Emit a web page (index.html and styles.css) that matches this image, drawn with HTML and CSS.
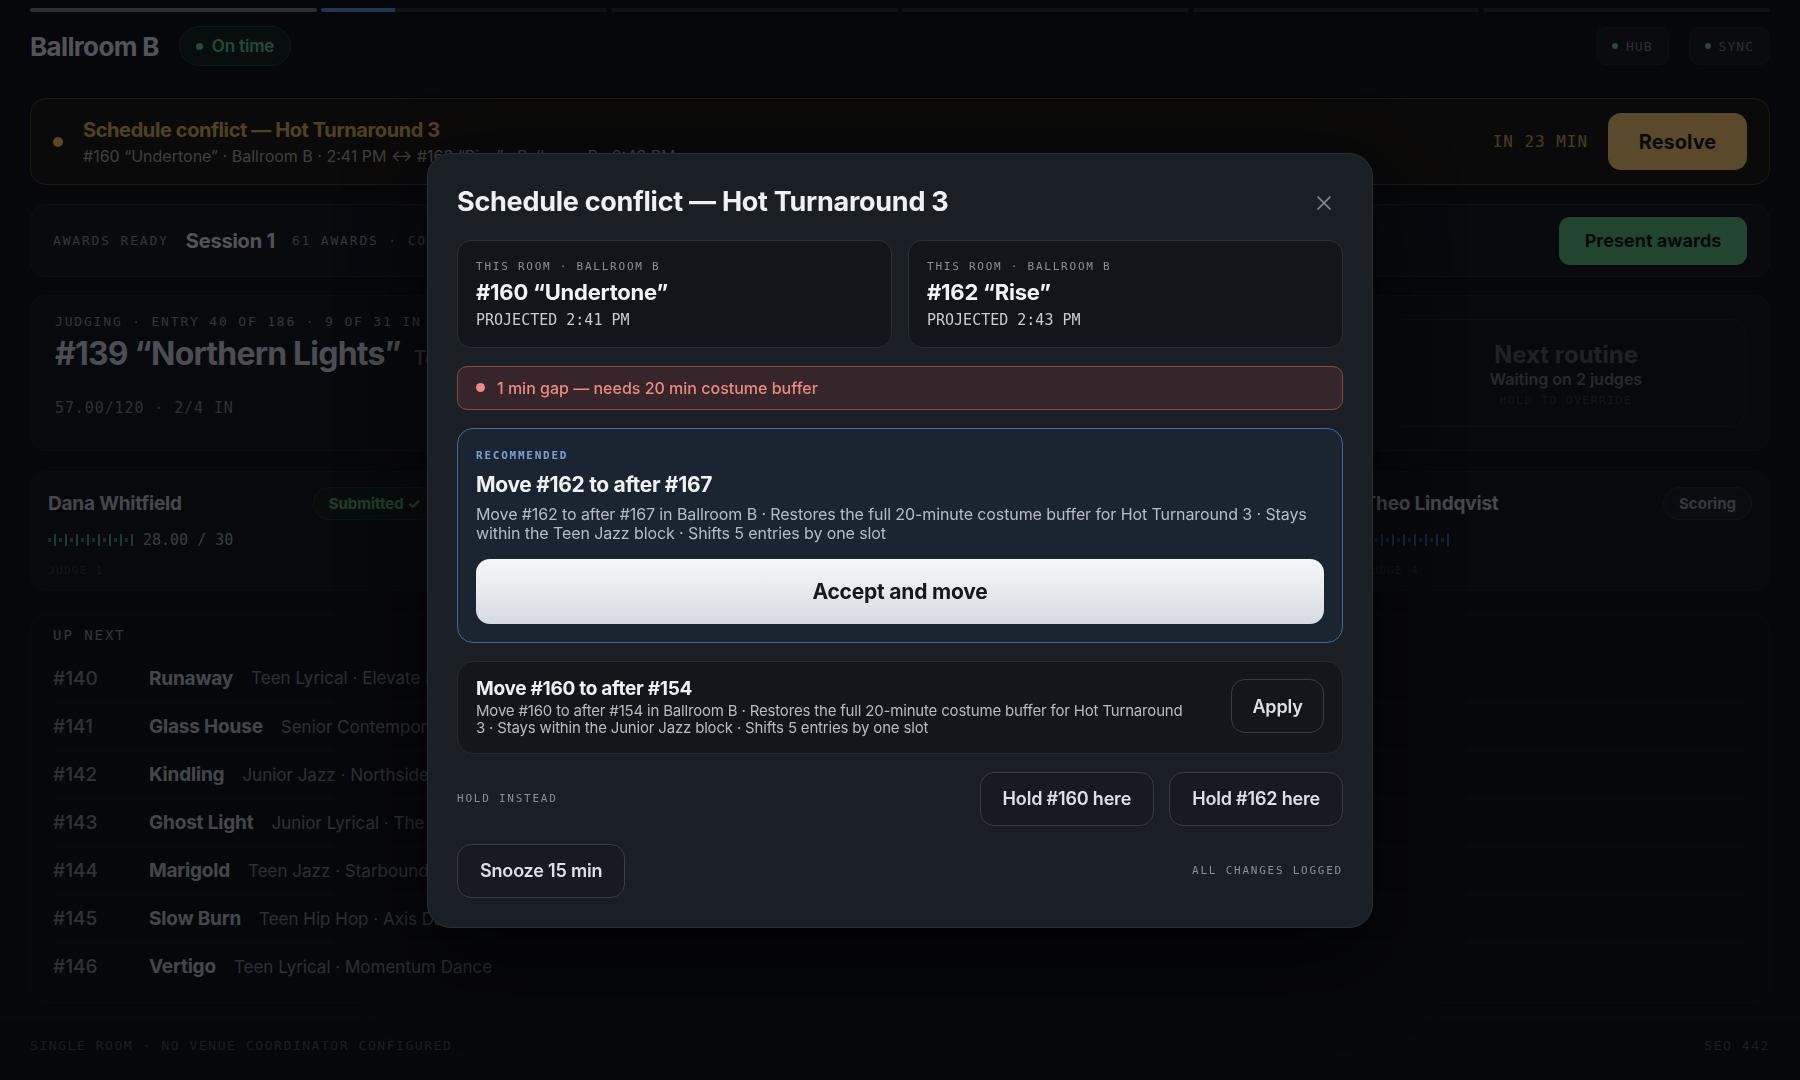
FILE: index.html
```html
<!DOCTYPE html>
<html lang="en">
<head>
    <meta charset="UTF-8">
    <meta name="viewport" content="width=device-width, initial-scale=1.0">
    <title>Ballroom B — Stage Manager</title>
    <link rel="stylesheet" href="styles.css">
</head>
<body>
    <div class="page">
        <div class="progress">
            <div class="seg done"></div>
            <div class="seg"><div class="fill"></div></div>
            <div class="seg"></div>
            <div class="seg"></div>
            <div class="seg"></div>
            <div class="seg"></div>
        </div>

        <header class="topbar">
            <div class="room">
                <h1>Ballroom B</h1>
                <span class="pill ok"><span class="dot"></span>On time</span>
            </div>
            <div class="links">
                <span class="chip"><span class="dot"></span>HUB</span>
                <span class="chip"><span class="dot"></span>SYNC</span>
            </div>
        </header>

        <section class="banner">
            <span class="banner-dot"></span>
            <div class="banner-text">
                <div class="banner-title">Schedule conflict — Hot Turnaround 3</div>
                <div class="banner-sub">#160 “Undertone” · Ballroom B · 2:41 PM ↔ #162 “Rise” · Ballroom B · 2:43 PM</div>
            </div>
            <span class="countdown">IN 23 MIN</span>
            <button class="btn-resolve">Resolve</button>
        </section>

        <section class="awards">
            <span class="mono-label">AWARDS READY</span>
            <span class="session">Session 1</span>
            <span class="mono-label">61 AWARDS · COUNTS VERIFIED</span>
            <button class="btn-awards">Present awards</button>
        </section>

        <section class="judging">
            <div class="judging-main">
                <div class="mono-label">JUDGING · ENTRY 40 OF 186 · 9 OF 31 IN TEEN CONTEMPORARY</div>
                <div class="now">#139 “Northern Lights” <span class="now-meta">Teen Contemporary · Elevate Dance</span></div>
                <div class="mono-stat">57.00/120 · 2/4 IN</div>
            </div>
            <div class="next-box">
                <div class="next-title">Next routine</div>
                <div class="next-sub">Waiting on 2 judges</div>
                <div class="next-hint">HOLD TO OVERRIDE</div>
            </div>
        </section>

        <section class="judges">
            <div class="judge">
                <div class="judge-head">
                    <span class="judge-name">Dana Whitfield</span>
                    <span class="status done">Submitted ✓</span>
                </div>
                <div class="judge-score">
                    <span class="ticks green"><span class="lo"></span><span class="hi"></span><span class="lo"></span><span class="hi"></span><span class="lo"></span><span class="hi"></span><span class="lo"></span><span class="hi"></span><span class="lo"></span><span class="hi"></span><span class="lo"></span><span class="hi"></span><span class="lo"></span><span class="hi"></span><span class="lo"></span><span class="hi"></span></span>
                    <span class="score-num">28.00 / 30</span>
                </div>
                <div class="judge-id">JUDGE 1</div>
            </div>
            <div class="judge">
                <div class="judge-head">
                    <span class="judge-name">Marcus Bell</span>
                    <span class="status done">Submitted ✓</span>
                </div>
                <div class="judge-score">
                    <span class="ticks green"><span class="lo"></span><span class="hi"></span><span class="lo"></span><span class="hi"></span><span class="lo"></span><span class="hi"></span><span class="lo"></span><span class="hi"></span><span class="lo"></span><span class="hi"></span><span class="lo"></span><span class="hi"></span><span class="lo"></span><span class="hi"></span><span class="lo"></span><span class="hi"></span></span>
                    <span class="score-num">29.00 / 30</span>
                </div>
                <div class="judge-id">JUDGE 2</div>
            </div>
            <div class="judge">
                <div class="judge-head">
                    <span class="judge-name">Priya Raman</span>
                    <span class="status">Scoring</span>
                </div>
                <div class="judge-score">
                    <span class="ticks blue"><span class="lo"></span><span class="hi"></span><span class="lo"></span><span class="hi"></span><span class="lo"></span><span class="hi"></span><span class="lo"></span><span class="hi"></span><span class="lo"></span><span class="hi"></span><span class="lo"></span><span class="hi"></span><span class="lo"></span><span class="hi"></span><span class="lo"></span><span class="hi"></span></span>
                </div>
                <div class="judge-id">JUDGE 3</div>
            </div>
            <div class="judge">
                <div class="judge-head">
                    <span class="judge-name">Theo Lindqvist</span>
                    <span class="status">Scoring</span>
                </div>
                <div class="judge-score">
                    <span class="ticks blue"><span class="lo"></span><span class="hi"></span><span class="lo"></span><span class="hi"></span><span class="lo"></span><span class="hi"></span><span class="lo"></span><span class="hi"></span><span class="lo"></span><span class="hi"></span><span class="lo"></span><span class="hi"></span><span class="lo"></span><span class="hi"></span><span class="lo"></span><span class="hi"></span></span>
                </div>
                <div class="judge-id">JUDGE 4</div>
            </div>
        </section>

        <section class="upnext">
            <div class="mono-label big">UP NEXT</div>
            <div class="entry"><span class="num">#140</span><span class="title">Runaway</span><span class="meta">Teen Lyrical · Elevate Dance</span></div>
            <div class="entry"><span class="num">#141</span><span class="title">Glass House</span><span class="meta">Senior Contemporary · Pulse Studio</span></div>
            <div class="entry"><span class="num">#142</span><span class="title">Kindling</span><span class="meta">Junior Jazz · Northside Ballet</span></div>
            <div class="entry"><span class="num">#143</span><span class="title">Ghost Light</span><span class="meta">Junior Lyrical · The Movement Lab</span></div>
            <div class="entry"><span class="num">#144</span><span class="title">Marigold</span><span class="meta">Teen Jazz · Starbound Studio</span></div>
            <div class="entry"><span class="num">#145</span><span class="title">Slow Burn</span><span class="meta">Teen Hip Hop · Axis Dance Co.</span></div>
            <div class="entry"><span class="num">#146</span><span class="title">Vertigo</span><span class="meta">Teen Lyrical · Momentum Dance</span></div>
        </section>

        <footer class="footer">
            <span>SINGLE ROOM · NO VENUE COORDINATOR CONFIGURED</span>
            <span>SEQ 442</span>
        </footer>
    </div>

    <div class="scrim">
        <div class="modal">
            <div class="modal-head">
                <h2>Schedule conflict — Hot Turnaround 3</h2>
                <button class="close" aria-label="Close">
                    <svg width="16" height="16" viewBox="0 0 16 16"><path d="M2 2 L14 14 M14 2 L2 14" stroke="currentColor" stroke-width="1.6" stroke-linecap="round"/></svg>
                </button>
            </div>

            <div class="rooms">
                <div class="room-card">
                    <div class="tiny">THIS ROOM · BALLROOM B</div>
                    <div class="room-entry">#160 “Undertone”</div>
                    <div class="projected">PROJECTED 2:41 PM</div>
                </div>
                <div class="room-card">
                    <div class="tiny">THIS ROOM · BALLROOM B</div>
                    <div class="room-entry">#162 “Rise”</div>
                    <div class="projected">PROJECTED 2:43 PM</div>
                </div>
            </div>

            <div class="alert"><span class="alert-dot"></span>1 min gap — needs 20 min costume buffer</div>

            <div class="option recommended">
                <div class="tiny blue">RECOMMENDED</div>
                <div class="option-title">Move #162 to after #167</div>
                <p class="option-desc">Move #162 to after #167 in Ballroom B · Restores the full 20-minute costume buffer for Hot Turnaround 3 · Stays within the Teen Jazz block · Shifts 5 entries by one slot</p>
                <button class="btn-accept">Accept and move</button>
            </div>

            <div class="option alt">
                <div class="alt-text">
                    <div class="option-title small">Move #160 to after #154</div>
                    <p class="option-desc small">Move #160 to after #154 in Ballroom B · Restores the full 20-minute costume buffer for Hot Turnaround 3 · Stays within the Junior Jazz block · Shifts 5 entries by one slot</p>
                </div>
                <button class="btn-ghost">Apply</button>
            </div>

            <div class="modal-row">
                <span class="tiny">HOLD INSTEAD</span>
                <div class="row-btns">
                    <button class="btn-ghost wide">Hold #160 here</button>
                    <button class="btn-ghost wide">Hold #162 here</button>
                </div>
            </div>

            <div class="modal-row">
                <button class="btn-ghost wide">Snooze 15 min</button>
                <span class="tiny">ALL CHANGES LOGGED</span>
            </div>
        </div>
    </div>
</body>
</html>
```

FILE: styles.css
```css
body {
    margin: 0;
    background: #0c0e13;
    color: #e4e7ed;
    font-family: Inter, "Noto Sans", sans-serif;
    height: 1080px;
    overflow: hidden;
}

button {
    font-family: inherit;
    cursor: pointer;
}

.page {
    padding: 8px 30px 0;
}

.mono-label {
    font-family: "DejaVu Sans Mono", monospace;
    font-size: 13px;
    letter-spacing: 0.14em;
    color: #7d828b;
}

/* progress segments */
.progress {
    display: flex;
    gap: 4px;
}

.progress .seg {
    flex: 1;
    height: 4px;
    border-radius: 2px;
    background: #262a31;
    overflow: hidden;
}

.progress .seg.done {
    background: #6d727b;
}

.progress .fill {
    width: 26%;
    height: 100%;
    background: #4f82c4;
}

/* top bar */
.topbar {
    display: flex;
    justify-content: space-between;
    align-items: center;
    height: 40px;
    margin-top: 14px;
}

.room {
    display: flex;
    align-items: center;
    gap: 20px;
}

.room h1 {
    margin: 0;
    font-size: 26px;
    letter-spacing: -0.025em;
    color: #c7cad1;
}

.pill {
    display: flex;
    align-items: center;
    gap: 9px;
    height: 38px;
    padding: 0 16px;
    border-radius: 20px;
    font-size: 17px;
    font-weight: 600;
    letter-spacing: -0.01em;
}

.pill.ok {
    color: #57b57c;
    background: #10201a;
    border: 1px solid #1d3a2a;
}

.dot {
    width: 7px;
    height: 7px;
    border-radius: 50%;
    background: #57b57c;
}

.links {
    display: flex;
    gap: 20px;
}

.chip {
    display: flex;
    align-items: center;
    gap: 8px;
    height: 36px;
    padding: 0 15px;
    border-radius: 10px;
    background: #14171c;
    border: 1px solid #1c2027;
    font-family: "DejaVu Sans Mono", monospace;
    font-size: 13px;
    letter-spacing: 0.08em;
    color: #6c727b;
}

.chip .dot {
    width: 6px;
    height: 6px;
}

/* conflict banner */
.banner {
    display: flex;
    align-items: center;
    height: 87px;
    margin-top: 32px;
    padding: 0 22px;
    box-sizing: border-box;
    border: 1px solid #4a3d1f;
    border-radius: 16px;
    background: #17150f;
}

.banner-dot {
    width: 10px;
    height: 10px;
    border-radius: 50%;
    background: #d9b04f;
    margin-right: 20px;
}

.banner-text {
    flex: 1;
}

.banner-title {
    font-size: 20px;
    font-weight: 700;
    letter-spacing: -0.02em;
    color: #c4a04a;
}

.banner-sub {
    margin-top: 4px;
    font-size: 16px;
    color: #9c9a93;
}

.countdown {
    font-family: "DejaVu Sans Mono", monospace;
    font-size: 16px;
    letter-spacing: 0.06em;
    color: #b09350;
    margin-right: 20px;
}

.btn-resolve {
    width: 139px;
    height: 57px;
    border: none;
    border-radius: 13px;
    background: #dcb461;
    color: #17130a;
    font-size: 20px;
    font-weight: 700;
}

/* awards */
.awards {
    display: flex;
    align-items: center;
    gap: 17px;
    height: 73px;
    margin-top: 19px;
    padding: 0 22px;
    box-sizing: border-box;
    border: 1px solid #1d2128;
    border-radius: 16px;
    background: #10141a;
}

.session {
    font-size: 20px;
    font-weight: 700;
    letter-spacing: -0.01em;
    color: #c7cad1;
}

.btn-awards {
    margin-left: auto;
    width: 188px;
    height: 48px;
    border: none;
    border-radius: 11px;
    background: #4fa96d;
    color: #0b150e;
    font-size: 18px;
    font-weight: 700;
}

/* judging */
.judging {
    display: flex;
    justify-content: space-between;
    height: 156px;
    margin-top: 18px;
    padding: 18px 24px 0;
    box-sizing: border-box;
    border: 1px solid #191c22;
    border-radius: 16px;
    background: #0f1217;
}

.now {
    margin-top: 5px;
    font-size: 32px;
    line-height: 40px;
    font-weight: 700;
    letter-spacing: -0.025em;
    color: #b9bcc3;
}

.now-meta {
    margin-left: 6px;
    font-size: 20px;
    font-weight: 500;
    letter-spacing: 0;
    color: #6b7078;
}

.mono-stat {
    margin-top: 21px;
    font-family: "DejaVu Sans Mono", monospace;
    font-size: 15px;
    letter-spacing: 0.06em;
    color: #6f747c;
}

.next-box {
    width: 358px;
    height: 108px;
    margin-top: 5px;
    box-sizing: border-box;
    border: 1px solid #1b1f26;
    border-radius: 14px;
    display: flex;
    flex-direction: column;
    align-items: center;
    justify-content: center;
}

.next-title {
    font-size: 24px;
    font-weight: 700;
    color: #4a4e56;
}

.next-sub {
    font-size: 16px;
    font-weight: 600;
    color: #5d626a;
}

.next-hint {
    margin-top: 5px;
    font-family: "DejaVu Sans Mono", monospace;
    font-size: 11px;
    letter-spacing: 0.15em;
    color: #2f333a;
}

/* judges */
.judges {
    display: grid;
    grid-template-columns: repeat(4, 1fr);
    gap: 14px;
    margin-top: 20px;
}

.judge {
    height: 120px;
    padding: 17px 17px 0;
    box-sizing: border-box;
    border: 1px solid #171a20;
    border-radius: 16px;
    background: #0f1217;
}

.judge-head {
    display: flex;
    justify-content: space-between;
    align-items: center;
    height: 28px;
}

.judge-name {
    font-size: 19px;
    font-weight: 700;
    letter-spacing: -0.01em;
    color: #a9adb4;
}

.status {
    padding: 6px 15px;
    border-radius: 16px;
    font-size: 15px;
    font-weight: 700;
    color: #7f8893;
    background: #151b22;
    border: 1px solid #232a33;
}

.status.done {
    color: #4f9a6a;
    background: #0f1d15;
    border-color: #1a3325;
}

.judge-score {
    display: flex;
    align-items: center;
    gap: 10px;
    height: 20px;
    margin-top: 13px;
}

.ticks {
    display: flex;
    align-items: center;
    gap: 3px;
}

.ticks .lo {
    width: 3px;
    height: 4px;
    background: currentColor;
    opacity: 0.7;
}

.ticks .hi {
    width: 2px;
    height: 12px;
    background: currentColor;
}

.ticks.green {
    color: #3f9a5f;
}

.ticks.blue {
    color: #355a8d;
}

.score-num {
    font-family: "DejaVu Sans Mono", monospace;
    font-size: 15px;
    color: #8a9a8f;
}

.judge-id {
    margin-top: 14px;
    font-family: "DejaVu Sans Mono", monospace;
    font-size: 11px;
    letter-spacing: 0.12em;
    color: #2e3238;
}

/* up next */
.upnext {
    margin-top: 23px;
    padding: 12px 22px 12px;
    border: 1px solid #13161b;
    border-radius: 16px;
}

.mono-label.big {
    font-size: 14px;
    margin-bottom: 11px;
}

.entry {
    display: flex;
    align-items: center;
    height: 48px;
    box-sizing: border-box;
    border-top: 1px solid #15181d;
}

.mono-label.big + .entry {
    border-top: none;
}

.entry .num {
    width: 96px;
    font-size: 19px;
    font-weight: 500;
    color: #767b83;
}

.entry .title {
    font-size: 19px;
    font-weight: 700;
    letter-spacing: -0.01em;
    color: #a7abb2;
    margin-right: 18px;
}

.entry .meta {
    font-size: 17px;
    color: #6d727a;
}

.footer {
    display: flex;
    justify-content: space-between;
    margin: 14px -30px 0;
    padding: 20px 30px 0;
    border-top: 1px solid #15181d;
    font-family: "DejaVu Sans Mono", monospace;
    font-size: 13px;
    letter-spacing: 0.12em;
    color: #42464d;
}

/* modal */
.scrim {
    position: fixed;
    inset: 0;
    background: rgba(3, 4, 6, 0.6);
    display: flex;
    justify-content: center;
    align-items: center;
}

.modal {
    width: 946px;
    box-sizing: border-box;
    padding: 28px 29px 29px;
    display: flex;
    flex-direction: column;
    gap: 18px;
    background: #1a1e25;
    border: 1px solid #2a2f38;
    border-radius: 24px;
    box-shadow: 0 30px 80px rgba(0, 0, 0, 0.7);
}

.modal-head {
    display: flex;
    justify-content: space-between;
    align-items: center;
    height: 40px;
}

.modal-head h2 {
    margin: 0;
    font-size: 27px;
    font-weight: 700;
    letter-spacing: -0.01em;
    color: #eef0f4;
}

.close {
    background: none;
    border: none;
    padding: 0;
    margin-right: 11px;
    margin-top: 3px;
    color: #8b919b;
    display: flex;
}

.rooms {
    display: grid;
    grid-template-columns: 1fr 1fr;
    gap: 16px;
}

.room-card {
    padding: 18px 18px 17px;
    border: 1px solid #2a2f37;
    border-radius: 14px;
    background: #12151a;
}

.tiny {
    font-family: "DejaVu Sans Mono", monospace;
    font-size: 11px;
    line-height: 16px;
    letter-spacing: 0.16em;
    color: #8a9099;
}

.tiny.blue {
    color: #78a4d4;
    font-weight: 700;
}

.room-entry {
    margin-top: 3px;
    font-size: 22px;
    line-height: 28px;
    font-weight: 700;
    letter-spacing: -0.01em;
    color: #f1f3f6;
}

.projected {
    margin-top: 4px;
    font-family: "DejaVu Sans Mono", monospace;
    font-size: 15px;
    line-height: 20px;
    color: #c9cdd3;
}

.alert {
    display: flex;
    align-items: center;
    gap: 12px;
    height: 44px;
    padding: 0 18px;
    box-sizing: border-box;
    border: 1px solid #8c4a45;
    border-radius: 10px;
    background: #36252a;
    font-size: 16px;
    font-weight: 500;
    color: #ec8a80;
}

.alert-dot {
    width: 9px;
    height: 9px;
    border-radius: 50%;
    background: #ec8a80;
}

.option {
    border-radius: 16px;
    padding: 18px;
}

.recommended {
    border: 1px solid #3f6996;
    background: #1b2531;
    padding-top: 19px;
    padding-bottom: 18px;
}

.option-title {
    margin-top: 7px;
    font-size: 21px;
    line-height: 28px;
    font-weight: 700;
    letter-spacing: -0.015em;
    color: #eef0f4;
}

.option-desc {
    margin: 6px 0 0;
    font-size: 16px;
    line-height: 19px;
    letter-spacing: -0.006em;
    color: #b7bcc4;
}

.btn-accept {
    width: 100%;
    height: 65px;
    margin-top: 16px;
    border: none;
    border-radius: 14px;
    background: linear-gradient(to bottom, #f6f7f9, #d6dbe2);
    color: #15181d;
    font-size: 21px;
    font-weight: 700;
    letter-spacing: -0.01em;
}

.alt {
    display: flex;
    align-items: center;
    gap: 36px;
    padding: 15px 18px 17px;
    border: 1px solid #262a32;
    background: #13161b;
}

.option-title.small {
    margin-top: 0;
    font-size: 19px;
    line-height: 24px;
}

.option-desc.small {
    margin-top: 1px;
    font-size: 15px;
    line-height: 17px;
    letter-spacing: -0.012em;
}

.btn-ghost {
    flex-shrink: 0;
    height: 54px;
    padding: 0 23px;
    border: 1px solid #383d47;
    border-radius: 14px;
    background: #171a20;
    color: #dde0e6;
    font-size: 18px;
    font-weight: 600;
    letter-spacing: -0.01em;
}

.alt .btn-ghost {
    width: 93px;
    padding: 0;
    background: #13161b;
}

.btn-ghost.wide {
    padding: 0 22px;
}

.modal-row {
    display: flex;
    justify-content: space-between;
    align-items: center;
}

.row-btns {
    display: flex;
    gap: 15px;
}
```
